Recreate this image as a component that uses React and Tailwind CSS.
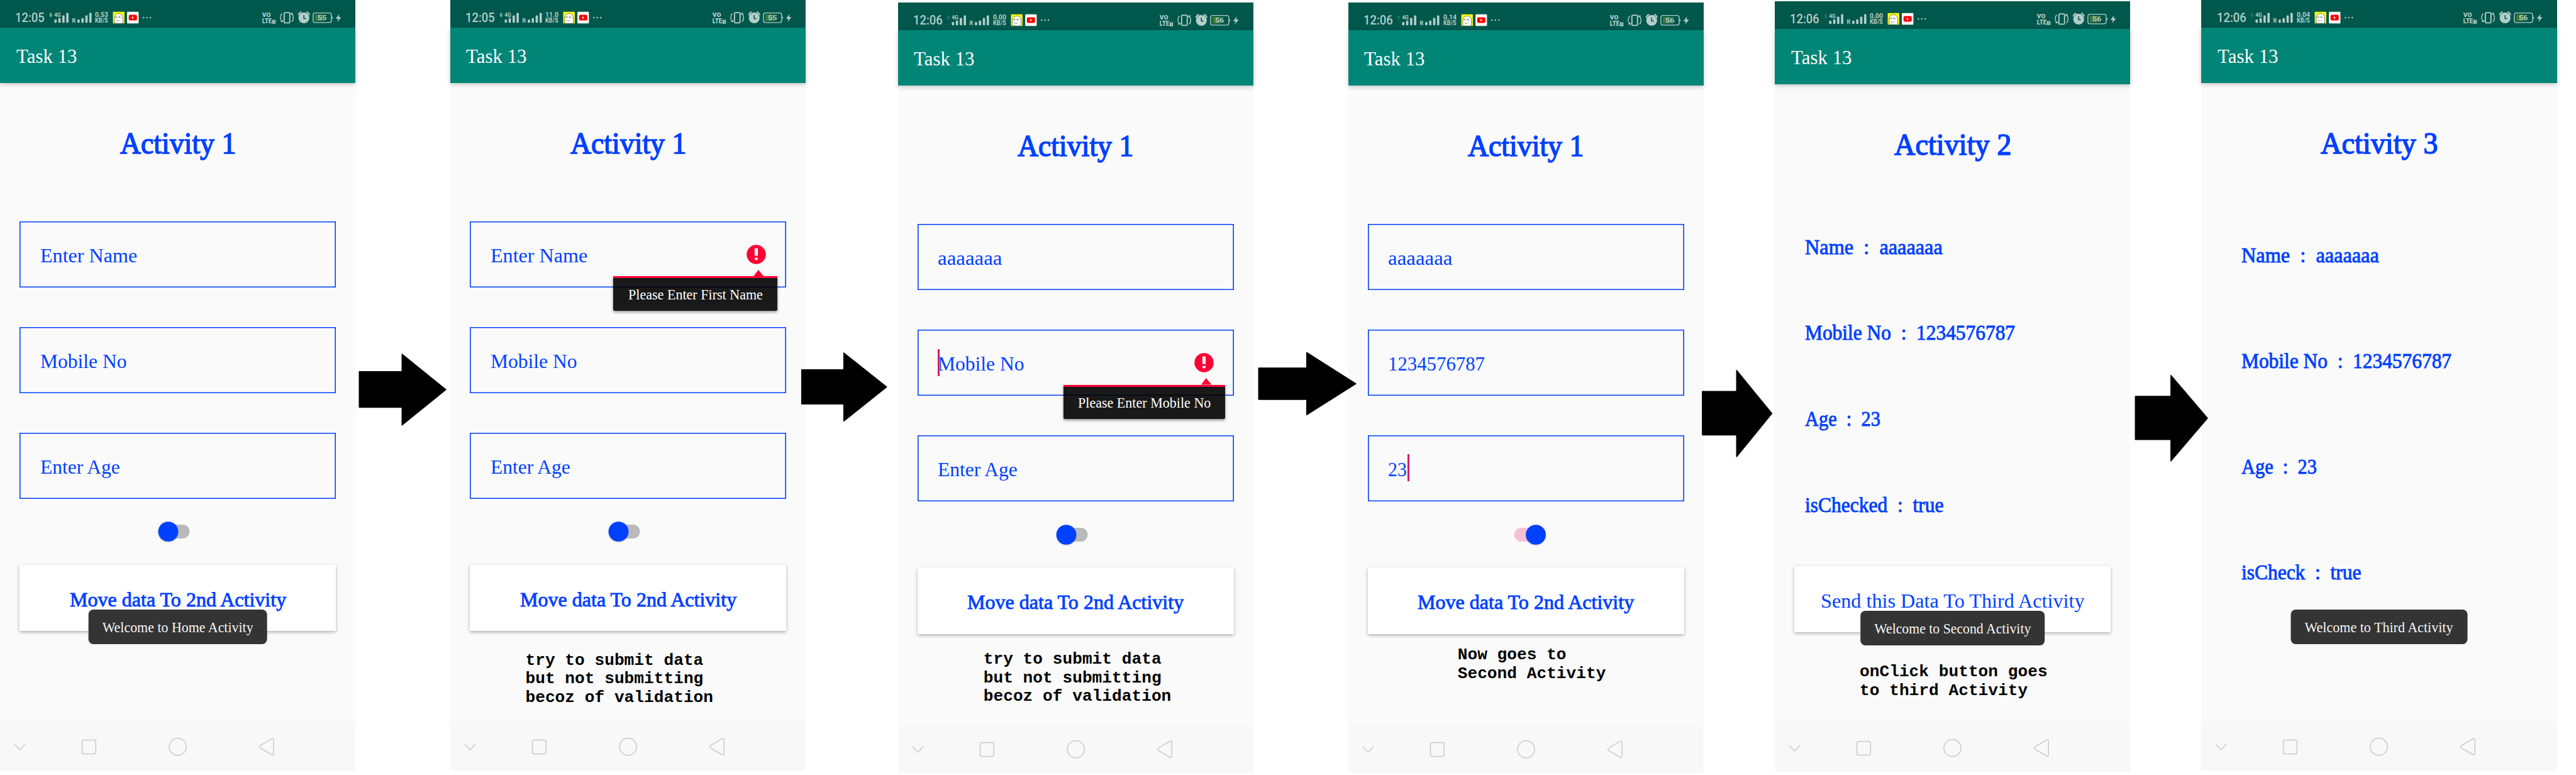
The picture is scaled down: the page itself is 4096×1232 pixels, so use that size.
import { useLayoutEffect, useRef, useState } from "react";

const SERIF = "font-['Liberation_Serif',serif]";

// Text stretched horizontally to an exact width.
function Fit({ w, className = "", children }) {
  const ref = useRef(null);
  const [scale, setScale] = useState(1);
  useLayoutEffect(() => {
    const natural = ref.current.offsetWidth;
    if (natural) setScale(w / natural);
  }, [w, children]);
  return (
    <span className={`block ${className}`} style={{ width: w }}>
      <span
        ref={ref}
        className="inline-block origin-left align-top whitespace-pre"
        style={{ transform: `scaleX(${scale})` }}
      >
        {children}
      </span>
    </span>
  );
}

function Signal({ dim }) {
  return (
    <svg viewBox="144 0 136 84" className="ml-[4.9px] h-[44px] w-[71.2px] shrink-0" fill="#b3cdc9">
      <g opacity={dim ? 0.3 : 1}>
        <path d="M148.5 44L153.3 38.5L158 44Z" />
        <path d="M148.5 46.5L153.3 52L158 46.5Z" />
      </g>
      <text x="163.5" y="51" fontSize="16.5" fontWeight="700" fontFamily="Roboto" textLength="20" lengthAdjust="spacingAndGlyphs">4G</text>
      <rect x="164" y="59" width="7" height="10" rx="2" />
      <rect x="176" y="55" width="7" height="14" rx="2" />
      <rect x="188" y="47" width="7" height="22" rx="2" />
      <rect x="200" y="39" width="7" height="30" rx="2" />
      <text x="217.5" y="69" fontSize="17" fontWeight="700" fontFamily="Roboto">R</text>
      <rect x="234" y="59" width="7" height="10" rx="2" />
      <rect x="246" y="55" width="7" height="14" rx="2" />
      <rect x="258" y="47" width="7" height="22" rx="2" />
      <rect x="270" y="39" width="7" height="30" rx="2" />
    </svg>
  );
}

function Notifications() {
  return (
    <svg viewBox="340 0 122 84" className="ml-[5.9px] h-[44px] w-[63.9px] shrink-0">
      <rect x="343" y="36" width="35" height="35" rx="1" fill="#fcfc12" />
      <path d="M347.500 71V56C347.500 46 353 41 361 41C369 41 373.500 47 373.500 56V71Z" fill="#fff" stroke="#111" strokeWidth="1" />
      <path d="M350 53C351 50 354 50 356 53M359 53C361 50 364 50 366 53M352 60C355 65 361 65 363 61" fill="none" stroke="#222" strokeWidth="1.100" />
      <circle cx="354" cy="52" r="1.200" fill="#111" />
      <circle cx="363" cy="52" r="1.200" fill="#111" />
      <rect x="365" y="53" width="4" height="3" fill="#fbc4c4" />
      <rect x="386" y="36" width="35" height="35" rx="2" fill="#fff" />
      <rect x="391" y="45" width="25" height="17" rx="4" fill="#f00" />
      <path d="M401 49.500V57.500L407 53.500Z" fill="#fff" />
      <circle cx="436" cy="53.500" r="2.400" fill="#b3cdc9" />
      <circle cx="446.500" cy="53.500" r="2.400" fill="#b3cdc9" />
      <circle cx="457" cy="53.500" r="2.400" fill="#b3cdc9" />
    </svg>
  );
}

function SystemIcons({ level }) {
  return (
    <svg viewBox="794 0 244 84" className="mr-[22px] ml-auto h-[44px] w-[127.7px] shrink-0" fill="#b3cdc9">
      <g fontFamily="Roboto" fontWeight="900">
        <text x="795.5" y="52.500" fontSize="19" textLength="26" lengthAdjust="spacingAndGlyphs">VO</text>
        <text x="795.5" y="71" fontSize="20" textLength="29" lengthAdjust="spacingAndGlyphs">LTE</text>
      </g>
      <rect x="826" y="60" width="10.500" height="12" rx="1" />
      <path d="M830 63.500L832 62.500V70" fill="none" stroke="#00574b" strokeWidth="1.600" />
      <rect x="862.500" y="38.500" width="17" height="31" rx="3" fill="none" stroke="#b3cdc9" strokeWidth="3.600" />
      <path d="M855.500 41C850 48 850 58 855.500 66M886 41C891.500 49 891.500 59 886 66" fill="none" stroke="#b3cdc9" strokeWidth="3" />
      <path d="M851 67H859V60ZM890.500 39H882.500V46Z" />
      <circle cx="922.500" cy="54" r="16.500" />
      <path d="M906 46C907 41 910 38 915 36.500M939 46C938 41 935 38 930 36.500" fill="none" stroke="#b3cdc9" strokeWidth="4" />
      <path d="M922.500 46V56.500H929" fill="none" stroke="#00574b" strokeWidth="3" />
      <rect x="950.500" y="39.500" width="55.500" height="29" rx="6" fill="none" stroke="#b3cdc9" strokeWidth="2.600" />
      <rect x="956" y="44" width="26" height="20" rx="3" fill="#3d7a36" />
      <rect x="1007" y="51" width="3" height="6" />
      <text x="964" y="61.500" fontSize="21" fontWeight="700" fontFamily="Roboto" textLength="27.500" lengthAdjust="spacingAndGlyphs">{level}</text>
      <path d="M1030 42.500L1019 57H1026.500L1024 67L1036 52H1028.500Z" />
    </svg>
  );
}

function StatusBar({ time, speed, level, dim }) {
  return (
    <div className="flex h-[44px] shrink-0 bg-[#00574b] pl-[24.3px] font-[Roboto,sans-serif] text-[#b3cdc9]">
      <Fit w={46.400} className="mt-[18.5px] shrink-0 text-[19.500px] leading-5 font-medium">{time}</Fit>
      <Signal dim={dim} />
      <div className="ml-[4.6px] mt-[18.8px] shrink-0">
        <Fit w={21} className="h-[9px] text-[11px] leading-[10px] font-bold">{speed}</Fit>
        <Fit w={21} className="h-[9px] text-[10px] leading-[9px] font-bold">KB/S</Fit>
      </div>
      <Notifications />
      <SystemIcons level={level} />
    </div>
  );
}

function NavBar() {
  return (
    <div className="absolute inset-x-0 bottom-0 h-[75.900px] bg-[#f8f8f8]">
      <svg viewBox="0 2195 1080 145" className="size-full" fill="none" stroke="#c9c9c9" strokeWidth="2.800">
        <path d="M44 2260L60 2277L76 2260" />
        <rect x="249.500" y="2247.500" width="41.500" height="42" rx="5" />
        <circle cx="540" cy="2268" r="26" />
        <path d="M791 2264L825 2243.500Q831.500 2241 831.500 2247V2288Q831.500 2294.500 825 2291.500L791 2271.500Q785 2267.500 791 2264Z" />
      </svg>
    </div>
  );
}

function Toast({ w, textW, children }) {
  return (
    <div
      className={`absolute top-[968.900px] left-1/2 flex h-[55px] -translate-x-1/2 items-center justify-center rounded-lg bg-[#2d2d2d]/97 pt-[2px] text-2xl leading-7 text-[#f5f5f5] ${SERIF}`}
      style={{ width: w }}
    >
      <Fit w={textW}>{children}</Fit>
    </div>
  );
}

function ErrorMark({ w, textW, text }) {
  return (
    <>
      <svg viewBox="0 0 60 60" className="absolute top-[37px] right-[32px] size-[31px]">
        <circle cx="30" cy="30" r="29.500" fill="#ff0033" />
        <rect x="25" y="11" width="10" height="23" fill="#fff" />
        <rect x="25.500" y="40" width="9" height="7" fill="#fff" />
      </svg>
      <div className="absolute top-[77.200px] right-[14px] z-10 h-[64.500px]" style={{ width: w }}>
        <svg viewBox="0 0 32 20" className="ml-auto mr-[21.5px] h-[10.500px] w-[16.500px]">
          <path d="M0 20L15 0L32 20Z" fill="#ff0033" />
        </svg>
        <div className={`flex h-[54.500px] items-center justify-center rounded-b-[2px] border-t-[3px] border-[#ff0033] bg-black/90 pt-[2px] text-[23px] leading-7 text-white shadow-[0_2px_4px_rgba(0,0,0,0.45)] ${SERIF}`}>
          <Fit w={textW}>{text}</Fit>
        </div>
      </div>
    </>
  );
}

function Field({ text, w, caret, error }) {
  return (
    <div className={`relative flex h-[105.200px] items-center pt-[3px] pl-[32.300px] text-[32px] leading-9 text-[#0040ff] shadow-[inset_0_0_0_1.6px_#0040ff] ${SERIF}`}>
      {caret === "start" && <span className="absolute top-[31.500px] left-[31.500px] h-[42.500px] w-[3.500px] bg-[#d81b60]" />}
      <Fit w={w}>{text}</Fit>
      {caret === "end" && <span className="mb-[5px] ml-[0.5px] h-[42.500px] w-[3.500px] bg-[#d81b60]" />}
      {error && <ErrorMark {...error} />}
    </div>
  );
}

function Toggle({ on }) {
  return (
    <svg viewBox="470 0 140 76" className="mt-[32.500px] ml-[246px] h-[40px] w-[73.300px]">
      <rect x="504" y="17" width="72" height="42" rx="21" fill={on ? "#f3c0d4" : "#b9b9b9"} />
      <ellipse cx={on ? 569.5 : 511} cy="40" rx="31" ry="31.500" fill="#000" opacity="0.16" />
      <circle cx={on ? 569.5 : 511} cy="38" r="30.300" fill="#0040ff" />
    </svg>
  );
}

function Button({ w, bold, className, children }) {
  return (
    <div className={`mx-[31.400px] flex h-[105.200px] items-center justify-center bg-white pt-[4px] text-[32.500px] leading-9 text-[#0040ff] shadow-[0_2px_5px_rgba(0,0,0,0.3)] ${SERIF} ${bold ? "[-webkit-text-stroke:0.9px_#0040ff]" : ""} ${className}`}>
      <Fit w={w}>{children}</Fit>
    </div>
  );
}

function Phone({ top = 0, status, title, titleW, note, toast, children }) {
  return (
    <section className="relative flex h-[1224.700px] w-[565.250px] shrink-0 flex-col bg-[#fafafa]" style={{ marginTop: top }}>
      <StatusBar {...status} />
      <header className={`h-[88px] shrink-0 bg-[#008577] pt-[27px] pl-[25.500px] text-[32.500px] leading-9 text-white shadow-[0_2px_7px_rgba(0,0,0,0.22)] ${SERIF}`}>
        <Fit w={97}>Task 13</Fit>
      </header>
      <h1 className={`mt-[66.300px] flex h-[60px] shrink-0 justify-center text-[49px] leading-[60px] text-[#0040ff] [-webkit-text-stroke:1.5px_#0040ff] ${SERIF}`}>
        <Fit w={titleW}>{title}</Fit>
      </h1>
      {children}
      <NavBar />
      {toast && <Toast {...toast} />}
      {note && (
        <div
          className="absolute font-['Liberation_Mono',monospace] text-[26.200px] leading-[29.500px] font-bold whitespace-pre text-black"
          style={{ left: note.x, top: note.y }}
        >
          {note.text}
        </div>
      )}
    </section>
  );
}

function Form({ fields, on }) {
  return (
    <>
      <div className="mx-[31.400px] mt-[93.500px] flex flex-col gap-[62.800px]">
        {fields.map((f) => (
          <Field key={f.text} {...f} />
        ))}
      </div>
      <Toggle on={on} />
      <Button w={344} bold className="mt-[32.700px]">Move data To 2nd Activity</Button>
    </>
  );
}

function Details({ rows, className }) {
  return (
    <div className={`flex flex-col text-[33px] leading-10 text-[#0040ff] [-webkit-text-stroke:0.9px_#0040ff] ${SERIF} ${className}`}>
      {rows.map(([text, w]) => (
        <Fit key={text} w={w}>{text}</Fit>
      ))}
    </div>
  );
}

// Block arrow drawn in the gap between two screens; box is the gap in diagram units.
function Arrow({ box, x, shaft, head }) {
  const d = `M${x[0]} ${shaft[0]}H${x[1]}V${head[0]}L${x[2]} ${(head[0] + head[1]) / 2}L${x[1]} ${head[1]}V${shaft[1]}H${x[0]}Z`;
  return (
    <div className="z-10 h-[1232px] shrink-0" style={{ width: box[1] * 0.52338 }}>
      <svg viewBox={`${box[0]} 0 ${box[1]} 2354`} className="size-full overflow-visible" preserveAspectRatio="none">
        <path d={d} fill="#000" stroke="#000" strokeWidth="3" strokeLinejoin="round" />
      </svg>
    </div>
  );
}

const NAME = { text: "Enter Name", w: 154.5 };
const MOBILE = { text: "Mobile No", w: 138 };
const AGE = { text: "Enter Age", w: 127 };
const FILLED = { text: "aaaaaaa", w: 102 };

export default function App() {
  return (
    <main className="flex h-[1232px] w-[4096px] items-start overflow-hidden bg-white">
      <Phone
        status={{ time: "12:05", speed: "0.53", level: "55" }}
        title="Activity 1"
        titleW={184}
        toast={{ w: 284.7, textW: 240.3, children: "Welcome to Home Activity" }}
      >
        <Form fields={[NAME, MOBILE, AGE]} />
      </Phone>
      <Arrow box={[1080, 288]} x={[1092, 1222, 1355]} shaft={[1129, 1237]} head={[1076, 1291]} />
      <Phone
        status={{ time: "12:05", speed: "11.0", level: "55" }}
        title="Activity 1"
        titleW={184}
        note={{ x: 119.5, y: 1035.5, text: "try to submit data\nbut not submitting\nbecoz of validation" }}
      >
        <Form fields={[{ ...NAME, error: { w: 260.5, textW: 214, text: "Please Enter First Name" } }, MOBILE, AGE]} />
      </Phone>
      <Arrow box={[2448, 280]} x={[2436, 2564, 2694]} shaft={[1123, 1227]} head={[1072, 1279]} />
      <Phone
        top={4.2}
        status={{ time: "12:06", speed: "0.00", level: "56", dim: true }}
        title="Activity 1"
        titleW={184}
        note={{ x: 136, y: 1030, text: "try to submit data\nbut not submitting\nbecoz of validation" }}
      >
        <Form
          fields={[FILLED, { ...MOBILE, caret: "start", error: { w: 257, textW: 211, text: "Please Enter Mobile No" } }, AGE]}
        />
      </Phone>
      <Arrow box={[3808, 288]} x={[3824, 3970, 4119]} shaft={[1118, 1213]} head={[1071, 1260]} />
      <Phone
        top={4.2}
        status={{ time: "12:06", speed: "0.14", level: "56", dim: true }}
        title="Activity 1"
        titleW={184}
        note={{ x: 174, y: 1023, text: "Now goes to\nSecond Activity" }}
      >
        <Form on fields={[FILLED, { text: "1234576787", w: 154 }, { text: "23", w: 29.8, caret: "end" }]} />
      </Phone>
      <Arrow box={[5176, 216]} x={[5172, 5276, 5383]} shaft={[1189, 1321]} head={[1125, 1387]} />
      <Phone
        top={2.1}
        status={{ time: "12:06", speed: "0.00", level: "56", dim: true }}
        title="Activity 2"
        titleW={186}
        toast={{ w: 293.6, textW: 249.4, children: "Welcome to Second Activity" }}
        note={{ x: 135, y: 1052, text: "onClick button goes\nto third Activity" }}
      >
        <Details
          className="mt-[112.400px] ml-[47.600px] gap-[96.600px]"
          rows={[
            ["Name  :  aaaaaaa", 219.3],
            ["Mobile No  :  1234576787", 334],
            ["Age  :  23", 119.7],
            ["isChecked  :  true", 220.5],
          ]}
        />
        <Button w={420} className="mt-[77.700px]">Send this Data To Third Activity</Button>
      </Phone>
      <Arrow box={[6472, 216]} x={[6488, 6596, 6707]} shaft={[1204, 1335]} head={[1140, 1400]} />
      <Phone
        status={{ time: "12:06", speed: "0.04", level: "56", dim: true }}
        title="Activity 3"
        titleW={186}
        toast={{ w: 281, textW: 236, children: "Welcome to Third Activity" }}
      >
        <Details
          className="mt-[127.800px] ml-[63.300px] gap-[128px]"
          rows={[
            ["Name  :  aaaaaaa", 219.3],
            ["Mobile No  :  1234576787", 334],
            ["Age  :  23", 119.7],
            ["isCheck  :  true", 190.6],
          ]}
        />
      </Phone>
    </main>
  );
}
